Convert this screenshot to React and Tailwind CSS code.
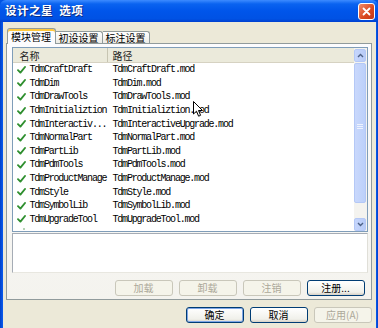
import React from 'react'

const rows = [
  ['TdmCraftDraft', 'TdmCraftDraft.mod'],
  ['TdmDim', 'TdmDim.mod'],
  ['TdmDrawTools', 'TdmDrawTools.mod'],
  ['TdmInitializtion', 'TdmInitializtion.mod'],
  ['TdmInteractiv...', 'TdmInteractiveUpgrade.mod'],
  ['TdmNormalPart', 'TdmNormalPart.mod'],
  ['TdmPartLib', 'TdmPartLib.mod'],
  ['TdmPdmTools', 'TdmPdmTools.mod'],
  ['TdmProductManage', 'TdmProductManage.mod'],
  ['TdmStyle', 'TdmStyle.mod'],
  ['TdmSymbolLib', 'TdmSymbolLib.mod'],
  ['TdmUpgradeTool', 'TdmUpgradeTool.mod'],
]

const cjk = "font-['Noto_Sans_CJK_SC','Noto_Sans',sans-serif]"

function Check() {
  return (
    <svg width="9" height="8" viewBox="0 0 9 8" className="shrink-0">
      <path d="M1 4.2 L3.4 6.6 L8 1" fill="none" stroke="#2f8f2f" strokeWidth="1.9" strokeLinecap="round" strokeLinejoin="round" />
    </svg>
  )
}

function Btn({ children, disabled, primary }) {
  return (
    <div
      className={`w-[58px] h-[16px] flex items-center justify-center rounded-[3px] border text-[10px] leading-none ${cjk} ${
        disabled
          ? 'border-[#c9c7ba] bg-[#f5f4ea] text-[#aca899]'
          : 'border-[#003c74] bg-[linear-gradient(#ffffff,#f0f0ea_80%,#d6d0c5)] text-black'
      } ${primary ? 'shadow-[inset_0_0_0_1px_#7fa6e6]' : ''}`}
    >
      {children}
    </div>
  )
}

function Chevron({ up }) {
  return (
    <svg width="7" height="5" viewBox="0 0 7 5">
      <path d={up ? 'M1 4 L3.5 1.5 L6 4' : 'M1 1 L3.5 3.5 L6 1'} fill="none" stroke="#4d6185" strokeWidth="1.4" />
    </svg>
  )
}

export default function App() {
  return (
    <div className="relative w-[378px] h-[328px] overflow-hidden flex flex-col bg-[#0054e3]">
      {/* title bar */}
      <div className="h-[22px] shrink-0 flex items-center justify-between pl-[5px] pr-[3px] rounded-t-[6px] bg-[linear-gradient(#3d8bff_0%,#0a63f0_18%,#0055ea_50%,#0052e4_85%,#0040d0_100%)]">
        <span className={`text-[11.5px] font-bold text-white tracking-[0.5px] [text-shadow:1px_1px_0_#0a2a80] ${cjk}`}>
          设计之星&nbsp;&nbsp;选项
        </span>
        <div className="w-[17px] h-[17px] rounded-[3px] border border-white bg-[linear-gradient(135deg,#f08a6a,#d9471e_60%,#c0381a)] flex items-center justify-center">
          <svg width="9" height="9" viewBox="0 0 9 9">
            <path d="M1.5 1.5 L7.5 7.5 M7.5 1.5 L1.5 7.5" stroke="white" strokeWidth="1.8" strokeLinecap="round" />
          </svg>
        </div>
      </div>

      {/* body */}
      <div className="flex-1 flex">
        <div className="w-[3px] bg-[linear-gradient(90deg,#0040c8,#0a5cf0)]" />
        <div className="flex-1 bg-[#ece9d8] pl-[3px] pr-[4px] flex flex-col">
          {/* tabs */}
          <div className={`h-[21px] flex items-end pl-[1px] ${cjk} text-[10px] text-black`}>
            <div className="relative z-10 h-[16px] w-[49px] mb-[-1px] flex items-center justify-center bg-[#fcfcfe] border border-b-0 border-[#919b9c] rounded-t-[3px] shadow-[inset_0_2px_0_#ffc83c]">
              模块管理
            </div>
            <div className="h-[12px] w-[47px] flex items-center justify-center bg-[linear-gradient(#ffffff,#ecebe5)] border border-b-0 border-l-0 border-[#919b9c] rounded-tr-[3px]">
              初设设置
            </div>
            <div className="h-[12px] w-[47px] flex items-center justify-center bg-[linear-gradient(#ffffff,#ecebe5)] border border-b-0 border-l-0 border-[#919b9c] rounded-tr-[3px]">
              标注设置
            </div>
          </div>

          {/* tab panel */}
          <div className="w-[366px] h-[257px] border border-[#919b9c] bg-[linear-gradient(#fcfcfe,#f4f3ee)] pt-[3px] pl-[5px] pr-[2px] flex flex-col">
            {/* list */}
            <div className="h-[185px] w-[356px] border border-[#7f9db9] bg-white flex overflow-hidden">
              <div className="flex-1 flex flex-col overflow-hidden">
                <div className={`h-[15px] shrink-0 flex bg-[#ebeadb] border-b border-[#d6d2c2] text-[10px] text-[#222] ${cjk}`}>
                  <div className="w-[95px] pl-[7px] flex items-center border-r border-[#c7c5b2]">名称</div>
                  <div className="flex-1 pl-[5px] flex items-center">路径</div>
                </div>
                <div className="font-['Liberation_Mono',monospace] text-[10px] tracking-[-1.2px] text-black">
                  {rows.map(([n, p]) => (
                    <div key={n} className="h-[13.6px] flex items-center">
                      <div className="w-[95px] pl-[4px] flex items-center gap-[4px] whitespace-nowrap overflow-hidden">
                        <Check />
                        <span>{n}</span>
                      </div>
                      <div className="flex-1 pl-[5px] whitespace-nowrap">{p}</div>
                    </div>
                  ))}
                  <div className="h-[4px] pl-[10px] flex items-end">
                    <div className="w-[2px] h-[2px] rounded-full bg-[#9cc49c]" />
                  </div>
                </div>
              </div>
              {/* scrollbar */}
              <div className="w-[13px] shrink-0 bg-[#f4f3ef] flex flex-col p-[0.5px]">
                <div className="h-[13px] rounded-[2px] border border-[#b4c8f6] bg-[linear-gradient(90deg,#c6d6fc,#b8cbf7)] flex items-center justify-center">
                  <Chevron up />
                </div>
                <div className="h-[140px] rounded-[2px] border border-[#b4c8f6] bg-[linear-gradient(90deg,#c9d8fc,#bcd0fa)] flex items-center justify-center mt-[1px]">
                  <div className="flex flex-col gap-[1px] mt-[-12px]">
                    <div className="w-[6px] h-[1px] bg-[#eef3fe]" />
                    <div className="w-[6px] h-[1px] bg-[#eef3fe]" />
                    <div className="w-[6px] h-[1px] bg-[#eef3fe]" />
                  </div>
                </div>
                <div className="flex-1" />
                <div className="h-[13px] rounded-[2px] border border-[#b4c8f6] bg-[linear-gradient(90deg,#c6d6fc,#b8cbf7)] flex items-center justify-center">
                  <Chevron />
                </div>
              </div>
            </div>

            {/* description area */}
            <div className="mt-[1px] h-[40px] w-[356px] border border-[#a5acb5] border-r-[#e0dfd8] border-b-[#e8e7e0] bg-white" />

            {/* panel buttons */}
            <div className="mt-[7px] flex justify-end gap-[6px] pr-[4px]">
              <Btn disabled>加载</Btn>
              <Btn disabled>卸载</Btn>
              <Btn disabled>注销</Btn>
              <Btn>注册...</Btn>
            </div>
          </div>

          {/* dialog buttons */}
          <div className="mt-[7px] flex justify-end gap-[6px]">
            <Btn primary>确定</Btn>
            <Btn>取消</Btn>
            <Btn disabled>应用(A)</Btn>
          </div>
        </div>
        <div className="w-[3px] bg-[linear-gradient(90deg,#0a5cf0,#0040c8)]" />
      </div>

      {/* mouse pointer */}
      <svg className="absolute left-[193px] top-[101px]" width="11" height="17" viewBox="0 0 11 17">
        <path d="M0.5 0.5 L0.5 13 L3.5 10.2 L5.6 15.2 L7.6 14.3 L5.5 9.5 L9.5 9.5 Z" fill="white" stroke="black" strokeWidth="1" strokeLinejoin="round" />
      </svg>
    </div>
  )
}
